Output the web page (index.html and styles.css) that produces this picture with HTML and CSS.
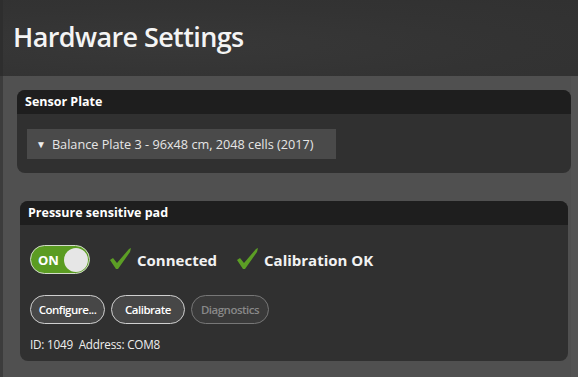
FILE: index.html
```html
<!DOCTYPE html>
<html>
<head>
<meta charset="utf-8">
<link rel="stylesheet" href="styles.css">
</head>
<body>
<div class="app">
  <header class="header">
    <h1 class="title">Hardware Settings</h1>
  </header>
  <main class="content">
    <section class="panel panel-plate">
      <div class="panel-head">Sensor Plate</div>
      <div class="panel-body plate-body">
        <div class="dropdown"><span class="caret">&#9660;</span>Balance Plate 3 - 96x48 cm, 2048 cells (2017)</div>
      </div>
    </section>
    <section class="panel panel-pad">
      <div class="panel-head">Pressure sensitive pad</div>
      <div class="panel-body pad-body">
        <div class="status-row">
          <div class="toggle"><span class="toggle-label">ON</span><span class="knob"></span></div>
          <div class="status">
            <svg class="check" width="24" height="22" viewBox="0 0 24 22"><polygon points="1,12 4,10 8,15 20,1 22,0 21,4 9,21 7,21" fill="#5c9e25"/></svg>
            <span>Connected</span>
          </div>
          <div class="status">
            <svg class="check" width="24" height="22" viewBox="0 0 24 22"><polygon points="1,12 4,10 8,15 20,1 22,0 21,4 9,21 7,21" fill="#5c9e25"/></svg>
            <span>Calibration OK</span>
          </div>
        </div>
        <div class="button-row">
          <button class="btn btn-configure">Configure...</button>
          <button class="btn btn-calibrate">Calibrate</button>
          <button class="btn btn-disabled">Diagnostics</button>
        </div>
        <div class="info">ID: 1049&nbsp; Address: COM8</div>
      </div>
    </section>
  </main>
</div>
</body>
</html>
```

FILE: styles.css
```css
html, body {
  margin: 0;
  padding: 0;
  height: 100%;
}
body {
  background: #505050;
  font-family: "Open Sans", "Noto Sans", sans-serif;
  color: #fff;
  overflow: hidden;
}
.app {
  min-height: 100%;
  border-left: 3px solid #3c3c3c;
  border-right: 7px solid #545454;
  box-sizing: border-box;
  width: 578px;
}
.header {
  height: 76px;
  background: radial-gradient(ellipse at 30% 60%, #383838 0%, #333 60%, #313131 100%);
  display: flex;
  align-items: flex-start;
  margin-left: -3px;
  margin-right: -7px;
  padding-left: 13px;
  border-left: 3px solid #2e2e2e;
}
.title {
  margin: 17px 0 0 -3px;
  font-size: 27px;
  font-weight: 600;
  letter-spacing: -0.6px;
  color: #f4f4f4;
  line-height: 40px;
}
.content {
  display: flex;
  flex-direction: column;
  padding-top: 14px;
}
.panel {
  border-radius: 8px;
  overflow: hidden;
  background: #303030;
}
.panel-plate {
  margin: 0 0 0 14px;
}
.panel-pad {
  margin: 28px 3px 0 17px;
}
.panel-head {
  height: 24px;
  background: #1e1e1e;
  font-size: 12.5px;
  font-weight: 700;
  line-height: 24px;
  padding-left: 8px;
  color: #fff;
}
.plate-body {
  padding: 15px 10px 14px 10px;
}
.dropdown {
  width: 309px;
  height: 30px;
  box-sizing: border-box;
  background: #4a4a4a;
  color: #e6e6e6;
  font-size: 12.7px;
  line-height: 30px;
  padding-left: 9px;
  display: flex;
  align-items: center;
}
.caret {
  font-size: 10px;
  margin-right: 6px;
  color: #eee;
}
.pad-body {
  padding: 20px 10px 11px 10px;
  height: 136px;
  box-sizing: border-box;
}
.status-row {
  display: flex;
  align-items: center;
  height: 29px;
}
.toggle {
  width: 60px;
  height: 29px;
  box-sizing: border-box;
  border: 1.5px solid #d3dccb;
  border-radius: 15px;
  background: #5b9c22;
  display: flex;
  align-items: center;
  justify-content: space-between;
  padding: 0 1px 0 7px;
}
.toggle-label {
  font-size: 13px;
  font-weight: 700;
  color: #fff;
}
.knob {
  width: 24px;
  height: 24px;
  border-radius: 50%;
  background: #e6e6e6;
}
.status {
  display: flex;
  align-items: center;
  font-size: 15px;
  font-weight: 700;
  color: #f2f2f2;
  margin-left: 19px;
}
.check {
  margin-right: 4px;
  margin-top: -2px;
}
.button-row {
  display: flex;
  gap: 6px;
  margin-top: 21px;
}
.btn {
  height: 29px;
  border-radius: 15px;
  border: 1px solid #cfcfcf;
  background: #474747;
  color: #fff;
  font-family: "Open Sans", "Noto Sans", sans-serif;
  font-size: 11.5px;
  font-weight: 600;
  padding: 0;
  letter-spacing: -0.5px;
  text-align: center;
}
.btn-configure {
  width: 75px;
}
.btn-calibrate {
  width: 74px;
}
.btn-disabled {
  width: 78px;
  border-color: #777;
  background: #3a3a3a;
  color: #888;
}
.info {
  margin-top: 12px;
  font-size: 11.7px;
  color: #eee;
  letter-spacing: -0.2px;
}
```
